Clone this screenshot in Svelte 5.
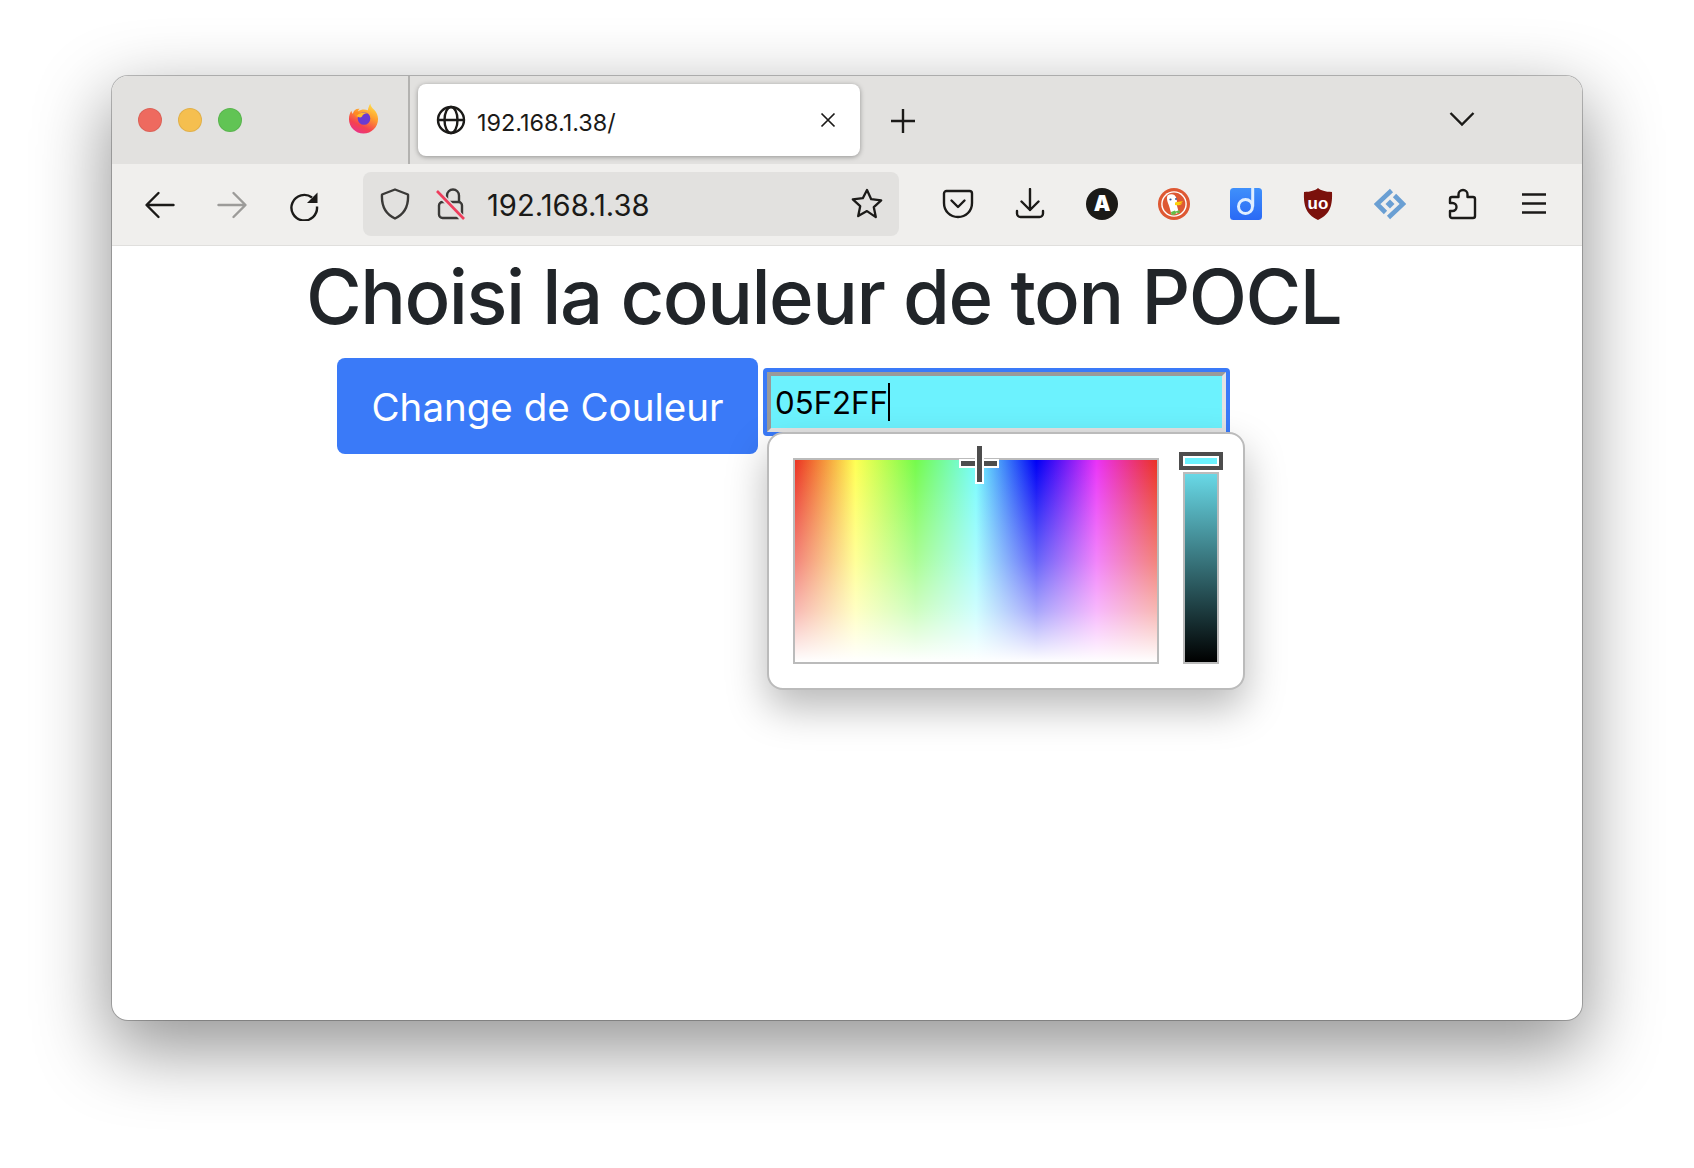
<script>
  const hex = "05F2FF";
</script>

<div class="screen">
<div class="win">
  <div class="tabstrip">
    <div class="lights">
      <span class="light red"></span>
      <span class="light yellow"></span>
      <span class="light green"></span>
    </div>
    <svg class="ff" viewBox="0 0 32 32">
      <defs>
        <linearGradient id="ffg" x1="0.8" y1="0" x2="0.3" y2="1">
          <stop offset="0" stop-color="#ffe14a" />
          <stop offset="0.4" stop-color="#ff9a2e" />
          <stop offset="0.75" stop-color="#f5424f" />
          <stop offset="1" stop-color="#e8328c" />
        </linearGradient>
      </defs>
      <path d="M23 0c.4 3 2 4.500 4 6.500 2.500 2.700 4 6 4 9.500 0 8.300-6.700 15-15 15S1 24.300 1 16c0-3.500 1-6 2.500-8.500.2 1.500.7 2.500 1.500 3C6 7 8.500 5 12 5.500c-1 1-1.500 1.800-1.500 2.500 3-2 7-2.300 10-1 .5-2.500 1-4.500 2.500-7z" fill="url(#ffg)" />
      <path d="M6 9c3-1 7 .5 6.500 3-1.500.3-3 1-3.500 2.500-1.500-2-3-3.500-3-5.500z" fill="#ff8a22" />
      <circle cx="16.500" cy="15.500" r="6.500" fill="#6a3bd1" />
      <path d="M9 13c2-3 7-4.500 11-3-3 .2-5 1.500-5.500 3.500C13 15 11 14.500 9 13z" fill="#ffbd2e" />
    </svg>
    <span class="sep"></span>
    <div class="tab">
      <svg class="ic30" viewBox="0 0 30 30" fill="none" stroke="#1b1a18" stroke-width="2.400">
        <circle cx="15" cy="15" r="13" />
        <ellipse cx="15" cy="15" rx="6.500" ry="13" />
        <path d="M2 15h26" />
      </svg>
      <span class="tabtitle">192.168.1.38/</span>
      <svg class="tabx" viewBox="0 0 16 16" fill="none" stroke="#1b1a18" stroke-width="1.700">
        <path d="M1.500 1.500l13 13M14.500 1.500l-13 13" />
      </svg>
    </div>
    <svg class="plus" viewBox="0 0 26 26" fill="none" stroke="#1b1a18" stroke-width="2.400">
      <path d="M13 1v24M1 13h24" />
    </svg>
    <svg class="chev" viewBox="0 0 26 16" fill="none" stroke="#1b1a18" stroke-width="2.400">
      <path d="M1.500 2L13 13.500 24.500 2" />
    </svg>
  </div>

  <div class="toolbar">
    <svg class="ic nav" viewBox="0 0 32 32" fill="none" stroke="#1b1a18" stroke-width="2.400" stroke-linecap="round" stroke-linejoin="round">
      <path d="M29.500 16H3M14.500 4L2.500 16l12 12" />
    </svg>
    <svg class="ic nav" viewBox="0 0 32 32" fill="none" stroke="#9c9b99" stroke-width="2.400" stroke-linecap="round" stroke-linejoin="round">
      <path d="M2.500 16H29M17.500 4l12 12-12 12" />
    </svg>
    <svg class="ic nav" viewBox="0 0 32 32" fill="none" stroke="#1b1a18" stroke-width="2.400">
      <path d="M24 8.500A12.800 12.800 0 1 0 29 17.500" />
      <path d="M29.500 3.500V14h-10.500z" fill="#1b1a18" stroke="none" />
    </svg>

    <div class="urlbar">
      <svg class="shield" viewBox="0 0 30 32" fill="none" stroke="#3a3937" stroke-width="2.400" stroke-linejoin="round">
        <path d="M15 1.500L28 6.500c.6 10.500-3 19.500-13 24C5 26 1.400 17 2 6.500z" />
      </svg>
      <svg class="lock" viewBox="0 0 30 32" fill="none">
        <path d="M11 14V7.500a6 6 0 0 1 12 0V14" stroke="#3a3937" stroke-width="2.400" />
        <rect x="3" y="14" width="23" height="16" rx="3.500" stroke="#3a3937" stroke-width="2.400" />
        <path d="M1 3l27 29" stroke="#e2e1df" stroke-width="6" />
        <path d="M1 3l27 28" stroke="#ee3d5c" stroke-width="2.600" />
      </svg>
      <span class="url">192.168.1.38</span>
      <svg class="star" viewBox="0 0 32 32" fill="none" stroke="#1b1a18" stroke-width="2.300" stroke-linejoin="round">
        <path d="M16 2l4.200 9.200 10 1.200-7.400 6.800 2 9.900L16 23.100l-8.800 5 2-9.900-7.400-6.800 10-1.200z" />
      </svg>
    </div>

    <div class="tools">
      <svg class="ic" viewBox="0 0 32 32" fill="none" stroke="#1b1a18" stroke-width="2.400" stroke-linecap="round" stroke-linejoin="round">
        <path d="M4.500 3h23A2.500 2.500 0 0 1 30 5.500V15c0 8-6 14-14 14S2 23 2 15V5.500A2.500 2.500 0 0 1 4.500 3z" />
        <path d="M9.500 12.500L16 19l6.500-6.500" />
      </svg>
      <svg class="ic" viewBox="0 0 32 32" fill="none" stroke="#1b1a18" stroke-width="2.400" stroke-linecap="round" stroke-linejoin="round">
        <path d="M16 1v21M7.500 13.500L16 22l8.500-8.500" />
        <path d="M3 23v2.500A3.500 3.500 0 0 0 6.500 29h19a3.500 3.500 0 0 0 3.500-3.500V23" />
      </svg>
      <svg class="ic" viewBox="0 0 32 32">
        <circle cx="16" cy="16" r="16" fill="#1b1a17" />
        <text x="16" y="23" class="alet">A</text>
      </svg>
      <svg class="ic" viewBox="0 0 32 32">
        <circle cx="16" cy="16" r="16" fill="#de5833" />
        <circle cx="16" cy="16" r="12.800" fill="#fff" />
        <circle cx="16" cy="16" r="11.400" fill="#de5833" />
        <path d="M9.500 7.500c4-2.500 8-1 9 3 .6 2.500.4 4.500.3 6.500l2 7.500c-2 1.500-5 2-7.500 1.500-1-4-2-8-3.500-11.500-.6-2-1.300-4.500-.3-7z" fill="#fff" />
        <path d="M17 14.500c2.500-.8 5-1 8-1.300-.5 1.300-2.500 1.800-4.500 2.300 1.500.2 2.800.1 4-.2-1 1.500-4 2.600-7.500 1.800z" fill="#fdd20a" />
        <path d="M13 24l4-1.500 .5 1 4-1.500.5 3.500-4-1-.5 2-4 .5z" fill="#65bc46" />
        <circle cx="12.500" cy="11.500" r="1.100" fill="#2d4f8e" />
        <circle cx="18" cy="11" r="0.900" fill="#2d4f8e" />
      </svg>
      <svg class="ic" viewBox="0 0 32 32">
        <defs>
          <linearGradient id="dg" x1="0" y1="0" x2="0" y2="1">
            <stop offset="0" stop-color="#3f90fb" />
            <stop offset="1" stop-color="#2a69f5" />
          </linearGradient>
        </defs>
        <rect width="32" height="32" rx="3.500" fill="url(#dg)" />
        <circle cx="15.500" cy="18.500" r="7" fill="none" stroke="#dfeeff" stroke-width="3" />
        <path d="M22.700 0v18.500" stroke="#dfeeff" stroke-width="3" />
      </svg>
      <svg class="ic" viewBox="0 0 32 32">
        <path d="M16 0c3 2.500 7 3.800 14 4 .5 12-1 22-14 28C3 26 1.500 16 2 4c7-.2 11-1.500 14-4z" fill="#7b110c" />
        <text x="16" y="20.500" class="ublet">uo</text>
      </svg>
      <svg class="ic" viewBox="0 0 32 32" fill="none" stroke="#6a9fd3" stroke-width="4.600">
        <path d="M17.500 2.500L3 16l8.500 8.500" />
        <path d="M14.500 29.500L29 16l-8.500-8.500" />
        <path d="M16 11.500l4.500 4.500-4.500 4.500-4.500-4.500z" fill="#6a9fd3" stroke="none" />
      </svg>
      <svg class="ic" viewBox="0 0 32 32" fill="none" stroke="#1b1a18" stroke-width="2.400" stroke-linejoin="round">
        <path d="M6 9h6.500V6.500a4.500 4.500 0 0 1 9 0V9H27a2 2 0 0 1 2 2v17a2 2 0 0 1-2 2H6a2 2 0 0 1-2-2v-5h2.500a4 4 0 0 0 0-8H4v-4a2 2 0 0 1 2-2z" />
      </svg>
      <svg class="ic" viewBox="0 0 32 32" fill="none" stroke="#1b1a18" stroke-width="2.400">
        <path d="M4 6.500h24M4 15.500h24M4 24.500h24" />
      </svg>
    </div>
  </div>

  <div class="page">
    <h1>Choisi la couleur de ton POCL</h1>
    <div class="row">
      <button class="btn"><span>Change de Couleur</span></button>
      <div class="focus">
        <div class="field"><span class="val">{hex}</span><span class="caret"></span></div>
        <div class="popup">
          <div class="palette">
            <div class="cross">
              <span class="ch"></span>
              <span class="cv"></span>
            </div>
          </div>
          <div class="slider">
            <div class="thumb"><span></span></div>
          </div>
        </div>
      </div>
    </div>
  </div>
</div>
</div>

<style>
  :global(body) {
    background: #fff;
    overflow: hidden;
  }

  .screen {
    height: 1168px;
    box-sizing: border-box;
    padding: 76px 0 0 112px;
    overflow: hidden;
  }

  .win {
    width: 1470px;
    height: 944px;
    border-radius: 16px;
    overflow: hidden;
    background: #fff;
    box-shadow: 0 0 0 1px rgba(0, 0, 0, 0.24), 0 26px 72px 4px rgba(0, 0, 0, 0.42);
    font-family: Inter, "Liberation Sans", sans-serif;
    color: #1b1a18;
  }

  svg {
    display: block;
    flex: none;
  }

  .tabstrip {
    height: 88px;
    background: #e2e1df;
    display: flex;
    align-items: center;
    padding-left: 26px;
  }

  .lights {
    display: flex;
    gap: 16px;
    margin-top: -1px;
  }

  .light {
    width: 24px;
    height: 24px;
    border-radius: 50%;
    box-sizing: border-box;
    border: 1px solid rgba(0, 0, 0, 0.08);
  }

  .red { background: #ee6a5f; }
  .yellow { background: #f5bf4f; }
  .green { background: #61c454; }

  .ff {
    width: 31px;
    height: 32px;
    margin-left: 106px;
    margin-top: -3px;
  }

  .sep {
    width: 2px;
    align-self: stretch;
    background: #b3b2b0;
    margin-left: 29px;
  }

  .tab {
    width: 442px;
    height: 72px;
    margin-left: 8px;
    box-sizing: border-box;
    padding: 0 24px 0 18px;
    background: #fff;
    border-radius: 8px;
    box-shadow: 0 1px 5px rgba(0, 0, 0, 0.35);
    display: flex;
    align-items: center;
  }

  .ic30 {
    width: 30px;
    height: 30px;
  }

  .tabtitle {
    margin-left: 11px;
    padding-top: 5px;
    font-size: 23.4px;
    flex: 1;
  }

  .tabx {
    width: 16px;
    height: 16px;
  }

  .plus {
    width: 26px;
    height: 26px;
    margin-left: 30px;
    margin-top: 1px;
  }

  .chev {
    width: 26px;
    height: 16px;
    margin-left: 533px;
    margin-top: -2px;
  }

  .toolbar {
    height: 80px;
    padding: 0 0 1px 32px;
    background: #f0efed;
    border-bottom: 1px solid #e0dfdd;
    display: flex;
    align-items: center;
    gap: 40px;
  }

  .ic {
    width: 32px;
    height: 32px;
  }

  .nav {
    margin-top: 2px;
  }

  .urlbar {
    width: 536px;
    height: 64px;
    margin-left: 3px;
    box-sizing: border-box;
    background: #e2e1df;
    border-radius: 8px;
    display: flex;
    align-items: center;
    padding: 0 16px 0 17px;
  }

  .shield {
    width: 30px;
    height: 32px;
  }

  .lock {
    width: 30px;
    height: 32px;
    margin-left: 26px;
  }

  .url {
    margin-left: 21px;
    padding-top: 2px;
    font-size: 29.2px;
    flex: 1;
  }

  .star {
    width: 32px;
    height: 32px;
  }

  .tools {
    display: flex;
    gap: 40px;
    margin-left: 3px;
  }

  .alet {
    font: 900 21px Inter, sans-serif;
    fill: #fff;
    text-anchor: middle;
  }

  .ublet {
    font: 700 17px "Liberation Sans", sans-serif;
    fill: #fff;
    text-anchor: middle;
  }

  .page {
    padding-top: 5px;
  }

  h1 {
    margin: 0;
    padding-left: 194px;
    font-size: 76px;
    font-weight: 500;
    line-height: 91px;
    letter-spacing: -1.5px;
    color: #212529;
    white-space: nowrap;
  }

  .row {
    display: flex;
    align-items: flex-start;
    padding-left: 225px;
    margin-top: 16px;
  }

  .btn {
    width: 421px;
    height: 96px;
    border: 0;
    padding: 1px 0 0;
    border-radius: 8px;
    background: #3a7af8;
    color: #fff;
    font: 400 38.5px Inter, sans-serif;
  }

  .focus {
    position: relative;
    margin: 10px 0 0 5px;
    width: 467px;
    height: 68px;
    box-sizing: border-box;
    border: 4px solid #3a7af8;
    border-radius: 4px;
  }

  .field {
    height: 60px;
    box-sizing: border-box;
    border-style: solid;
    border-width: 4px;
    border-color: #9a9a9a #e3e3e3 #e3e3e3 #9a9a9a;
    background: #6cf2fe;
    color: #000;
    font: 400 31.2px Inter, sans-serif;
    padding-left: 4px;
    display: flex;
    align-items: center;
  }

  .val {
    padding-top: 2px;
  }

  .caret {
    width: 2px;
    height: 38px;
    background: #000;
  }

  .popup {
    position: absolute;
    left: 0;
    top: 60px;
    width: 478px;
    height: 258px;
    box-sizing: border-box;
    background: #fff;
    border: 2px solid #bbb;
    border-radius: 16px;
    box-shadow: 0 18px 40px rgba(0, 0, 0, 0.28);
    padding: 24px 0 0 24px;
    display: flex;
    align-items: flex-start;
    gap: 24px;
  }

  .palette {
    position: relative;
    width: 366px;
    height: 206px;
    box-sizing: border-box;
    border: 2px solid #bbb;
    background:
      linear-gradient(rgba(255, 255, 255, 0), rgba(255, 255, 255, 0.4) 50%, rgba(255, 255, 255, 0.66) 75%, #fff),
      linear-gradient(90deg, #eb3324, #ffff54 16.67%, #75fb4c 33.33%, #75fbfd 50%, #0000f5 66.67%, #ea33f7 83.33%, #eb3324);
  }

  .cross {
    position: absolute;
    left: 164px;
    top: -14px;
    width: 40px;
    height: 38px;
  }

  .ch {
    position: absolute;
    left: 2px;
    top: 15px;
    width: 36px;
    height: 5px;
    background: #4d4d4d;
    box-shadow: 0 0 0 2px #fff;
  }

  .cv {
    position: absolute;
    left: 18px;
    top: 0;
    width: 5px;
    height: 36px;
    background: #4d4d4d;
    box-shadow: 0 0 0 2px #fff;
  }

  .slider {
    position: relative;
    width: 36px;
    height: 192px;
    margin-top: 14px;
    box-sizing: border-box;
    border: 2px solid #bbb;
    background: linear-gradient(#68d8e6, #000);
  }

  .thumb {
    position: absolute;
    left: -6px;
    top: -22px;
    width: 44px;
    height: 18px;
    box-sizing: border-box;
    border: 4px solid #4d4d4d;
    background: #fff;
    padding: 2px;
  }

  .thumb span {
    display: block;
    height: 6px;
    background: #6cf2fe;
  }
</style>
